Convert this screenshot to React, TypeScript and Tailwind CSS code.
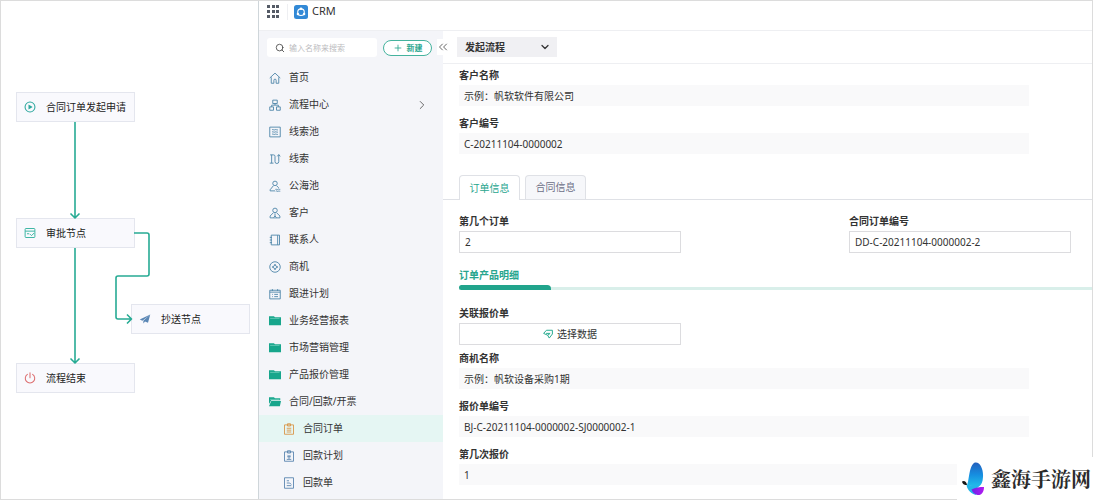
import type { ReactNode } from 'react';
import { ChevronDown, ChevronRight, ChevronsLeft, Plus, Search } from 'lucide-react';

const strokes: Record<string, ReactNode> = {
  home: <path d="M1 8 8 1.500 15 8M3 7v8h3.500v-4a1.500 1.500 0 0 1 3 0v4H13V7" />,
  flow: <path d="M5 1.500h6V6H5zM1 10.500h5V15H1zM10 10.500h5V15h-5zM8 6v2.200M3.500 10.500V8.200h9v2.300" />,
  pool: (
    <path d="M1 1.500h14v13H1zM4 5c1.300-1 2.700 1 4 0s2.700 1 4 0M4 8c1.300-1 2.700 1 4 0s2.700 1 4 0M4 11c1.300-1 2.700 1 4 0s2.700 1 4 0" />
  ),
  clue: <path d="M1 13.500h5M3.500 13.500V2.500M1.500 2.500H6a2 2 0 0 1 2 2v7a2.500 2.500 0 0 0 5 0V2.500M11 4.500l2-2.500 2 2.500" />,
  sea: (
    <path d="M8 1.500a3 3 0 1 1 0 6 3 3 0 0 1 0-6M6 7.500 1.500 13v1.500H8M10 7.500l3 3M8.500 12.500c1.200-1.300 2.200 1.300 3.400 0s2 .6 3.100 0M9 15c1.200-1.300 2.200 1 3.400 0s1.600.4 2.600 0" />
  ),
  customer: <path d="M8 1.500a3 3 0 1 1 0 6 3 3 0 0 1 0-6M6 7.500 1.500 12v2.500h13V12L10 7.500M8 8.500v3.500M6 14l2-2 2 2" />,
  contact: <path d="M3 1.500h11v13H3zM11.500 1.500v13M1 4.500h3M1 8h3M1 11.500h3" />,
  chance: (
    <path d="M8 1a7 7 0 1 1 0 14A7 7 0 0 1 8 1M8 4.200l1.200 2.600L11.800 8 9.200 9.200 8 11.800 6.800 9.200 4.200 8l2.600-1.200z" />
  ),
  plan: <path d="M1 3h14v11.500H1zM4.500 1.500V4M11.500 1.500V4M1 5.500h14M4 8.500h1M7 8.500h5M4 11.500h1M7 11.500h5" />,
  order: <path d="M2 2.500h12V15H2zM6 1h4v3H6zM5 7h6M5 9.500h6M5 12h6" />,
  payplan: <path d="M2 2.500h12V15H2zM6 1h4v3H6zM6 6.500l2 2 2-2M5.500 9h5M8 8.500v3.500M5 12.500h6" />,
  paynote: <path d="M2 1h12v14H2zM5 5h3M5 8h4l2 2M5 11.500h6" />,
};

const menu = [
  { icon: 'home', label: '首页' },
  { icon: 'flow', label: '流程中心', more: true },
  { icon: 'pool', label: '线索池' },
  { icon: 'clue', label: '线索' },
  { icon: 'sea', label: '公海池' },
  { icon: 'customer', label: '客户' },
  { icon: 'contact', label: '联系人' },
  { icon: 'chance', label: '商机' },
  { icon: 'plan', label: '跟进计划' },
  { icon: 'folder', label: '业务经营报表' },
  { icon: 'folder', label: '市场营销管理' },
  { icon: 'folder', label: '产品报价管理' },
  { icon: 'folderOpen', label: '合同/回款/开票' },
];

const subMenu = [
  { icon: 'order', label: '合同订单', active: true },
  { icon: 'payplan', label: '回款计划' },
  { icon: 'paynote', label: '回款单' },
];

function MenuIcon({ name, className }: { name: string; className: string }) {
  if (name === 'folder' || name === 'folderOpen') {
    return (
      <svg viewBox="0 0 16 16" className="size-3 shrink-0 text-[#17a68c]" fill="currentColor">
        {name === 'folder' ? (
          <path d="M0 1.500h6.500L8 3h8v10.500H0z" />
        ) : (
          <path d="M0 1.500h6.500L8 3h7v2.500H3L0 10.500zM3 6.500h13l-1.500 7H0z" />
        )}
        <path d="M1.500 4.500h12.500" stroke="#8fdccb" strokeWidth="0.800" />
      </svg>
    );
  }
  return (
    <svg viewBox="0 0 16 16" className={`size-3 shrink-0 ${className}`} fill="none" stroke="currentColor" strokeWidth="1.200">
      {strokes[name]}
    </svg>
  );
}

function FlowNode({ place, icon, label }: { place: string; icon: ReactNode; label: string }) {
  return (
    <div className={`absolute flex h-[30px] w-[119px] items-center gap-2.5 border border-[#e4e6ee] bg-[#f9f9fd] pl-[7px] whitespace-nowrap text-[#222] ${place}`}>
      {icon}
      {label}
    </div>
  );
}

function FlowChart() {
  return (
    <section className="relative w-[258px] shrink-0 border-r border-[#cfd6da]">
      <FlowNode
        place="top-[91px] left-[15px]"
        label="合同订单发起申请"
        icon={
          <svg viewBox="0 0 16 16" className="size-3 shrink-0" fill="none" stroke="#2ba79d" strokeWidth="1.400">
            <circle cx="8" cy="8" r="6.600" />
            <path d="M6 4.800 11.500 8 6 11.200z" fill="#2ba79d" stroke="none" />
          </svg>
        }
      />
      <FlowNode
        place="top-[217px] left-[15px]"
        label="审批节点"
        icon={
          <svg viewBox="0 0 16 16" className="size-3 shrink-0" fill="none" stroke="#3bb5a2" strokeWidth="1.300">
            <rect x="1.500" y="2" width="13" height="12" rx="1" />
            <path d="M1.500 5.500h13M4 9h3M8 9.500l2 2 3.500-3.500" />
          </svg>
        }
      />
      <FlowNode
        place="top-[303px] left-[130px]"
        label="抄送节点"
        icon={
          <svg viewBox="0 0 16 16" className="size-3 shrink-0" fill="#5b87b5">
            <path d="M15 2 1 8.500l3.500 1.700L12 4.500z" />
            <path d="M15 2 5.800 10.200V14l2.200-2.800 4 1.800z" />
          </svg>
        }
      />
      <FlowNode
        place="top-[362px] left-[15px]"
        label="流程结束"
        icon={
          <svg viewBox="0 0 16 16" className="size-3 shrink-0" fill="none" stroke="#dd6f70" strokeWidth="1.400" strokeLinecap="round">
            <path d="M4.500 3.200a6.300 6.300 0 1 0 7 0M8 1v6.500" />
          </svg>
        }
      />
      <svg className="absolute top-0 left-0 h-[400px] w-[257px]" fill="none" stroke="#27ab94" strokeWidth="1.600" strokeLinejoin="round">
        <path d="M74 121v95M69.500 212.500 74 217l4.500-4.500" />
        <path d="M74 247v114M69.500 357.500 74 362l4.500-4.500" />
        <path d="M133 232h13q2 0 2 2v39q0 2-2 2h-29q-2 0-2 2v39q0 2 2 2h13M126 313.500l4.500 4.500-4.500 4.500" />
      </svg>
    </section>
  );
}

function Sidebar() {
  return (
    <aside className="relative w-[184px] shrink-0 bg-[#f4f5f9]">
      <div className="flex h-[33px] items-center gap-1.5 pr-[11px] pl-2">
        <label className="flex h-[19px] min-w-0 flex-1 items-center gap-1 rounded-[3px] bg-white pl-2">
          <Search className="size-2.5 shrink-0 text-[#444]" />
          <input aria-label="搜索" placeholder="输入名称来搜索" className="w-full min-w-0 text-[8px] outline-none placeholder:text-[#bcbcc0]" />
        </label>
        <button className="flex h-4 w-[49px] items-center justify-center gap-1 rounded-full border border-[#45b39e] bg-white text-[8px] font-bold text-[#2aa68f]">
          <Plus className="size-2.5" strokeWidth={2} />
          新建
        </button>
      </div>
      <button aria-label="收起" className="absolute top-2 -right-1.5 z-10 flex h-4 w-3 items-center justify-center bg-white text-[#555]">
        <ChevronsLeft className="size-3.5 shrink-0" strokeWidth={1.5} />
      </button>
      <nav>
        {menu.map((item) => (
          <a key={item.label} href="#" className="flex h-[27px] items-center gap-2 px-2.5">
            <MenuIcon name={item.icon} className="text-[#4e86a9]" />
            <span className="flex-1">{item.label}</span>
            {item.more && <ChevronRight className="mr-1 size-3.5 text-[#555]" strokeWidth={1.5} />}
          </a>
        ))}
        {subMenu.map((item) => (
          <a key={item.label} href="#" className={`flex h-[27px] items-center gap-2 pl-6 ${item.active ? 'bg-[#e5f6f3]' : ''}`}>
            <MenuIcon name={item.icon} className={item.active ? 'text-[#d9964a]' : 'text-[#5b86b0]'} />
            {item.label}
          </a>
        ))}
      </nav>
    </aside>
  );
}

function Field({ id, label, value, boxed }: { id: string; label: string; value: string; boxed?: boolean }) {
  return (
    <div className={boxed ? 'w-[222px]' : 'w-[90%]'}>
      <label htmlFor={id} className="block leading-5 font-bold">
        {label}
      </label>
      <input
        id={id}
        readOnly
        defaultValue={value}
        className={`block w-full px-[5px] outline-none ${boxed ? 'h-[22px] border border-[#dcdcdf] bg-white' : 'h-[21px] bg-[#f9f9fa]'}`}
      />
    </div>
  );
}

function OrderForm() {
  return (
    <main className="min-w-0 flex-1">
      <div className="flex h-[33px] items-center border-b border-[#eeeff2] pl-3.5">
        <div className="relative">
          <select aria-label="流程" className="block h-5 w-[100px] appearance-none bg-[#f0f0f3] pl-2 font-bold outline-none">
            <option>发起流程</option>
          </select>
          <ChevronDown className="pointer-events-none absolute top-1 right-1.5 size-3" strokeWidth={2.5} />
        </div>
      </div>

      <div className="flex flex-col gap-[7px] pt-px pl-4">
        <Field id="customer-name" label="客户名称" value="示例：帆软软件有限公司" />
        <Field id="customer-code" label="客户编号" value="C-20211104-0000002" />
      </div>

      <div className="mt-[21px] flex h-[25px] gap-[5px] border-b border-[#dfe1e6] pl-4">
        <button className="-mb-px w-[61px] rounded-t-sm border border-b-0 border-[#dfe1e6] bg-white text-[#27a58e]">订单信息</button>
        <button className="w-[61px] rounded-t-sm border border-b-0 border-[#dfe1e6] bg-[#f6f7fa] text-[#6c6f86]">合同信息</button>
      </div>

      <div className="pl-4">
        <div className="flex justify-between pt-[11px] pr-[21px]">
          <Field id="order-index" label="第几个订单" value="2" boxed />
          <Field id="order-code" label="合同订单编号" value="DD-C-20211104-0000002-2" boxed />
        </div>

        <h2 className="mt-3 leading-5 font-bold text-[#27a58e]">订单产品明细</h2>
        <div className="border-b-[3px] border-[#d9efea]">
          <div className="-mb-[3px] h-[5px] w-[92px] rounded-tl-sm rounded-tr-md rounded-bl-sm bg-[#21a48c]" />
        </div>

        <div className="mt-[13px] w-[222px]">
          <h3 className="leading-5 font-bold">关联报价单</h3>
          <button className="flex h-[22px] w-full items-center justify-center gap-1 border border-[#dcdcdf] bg-white">
            <svg viewBox="0 0 16 16" className="size-2.5" fill="none" stroke="#2aac91" strokeWidth="1.600" strokeLinejoin="round">
              <path d="M1 7 5.500 2H15v6l-5 6.500L7.500 10zM5 7h6M7.500 10l4-3" />
            </svg>
            选择数据
          </button>
        </div>

        <div className="mt-[3px] flex flex-col gap-[7px] pb-3">
          <Field id="chance-name" label="商机名称" value="示例：帆软设备采购1期" />
          <Field id="quote-code" label="报价单编号" value="BJ-C-20211104-0000002-SJ0000002-1" />
          <Field id="quote-index" label="第几次报价" value="1" />
        </div>
      </div>
    </main>
  );
}

function Watermark() {
  return (
    <div className="absolute -right-px -bottom-px z-20 flex h-[43px] w-[136px] items-center gap-1.5 bg-white pl-1">
      <svg viewBox="0 0 24 34" className="h-[34px] w-6 shrink-0">
        <defs>
          <linearGradient id="wing" x1="0" y1="0" x2="0" y2="1">
            <stop offset="0" stopColor="#2460bd" />
            <stop offset="0.5" stopColor="#168de0" />
            <stop offset="1" stopColor="#22bfea" />
          </linearGradient>
          <linearGradient id="tail" x1="0" y1="0" x2="1" y2="0">
            <stop offset="0" stopColor="#6a24e8" />
            <stop offset="1" stopColor="#b51af0" />
          </linearGradient>
        </defs>
        <path d="M14 .5C19-.5 22.500 7 22 15c-.3 5-1.500 8-4 9.500L6 23.500C8.500 17 8 3 14 .5z" fill="url(#wing)" />
        <path d="M5.500 22.500c4 1 9 1 13 .5-1 3-4 4-7 4.500 0 2 2 4 4.500 5.500-5-.5-10-4.500-10.500-10.500z" fill="#24b5e9" />
        <path d="M10.500 27.500c4-2 8-2.500 12.500-2.500 0 5-2.500 8.500-6.500 8-3-.5-5-2.500-6-5.500z" fill="url(#tail)" />
        <path d="M1 19.500c2-1.500 4.500 0 5 3.500-2 0-4.500-.5-5-3.500z" fill="#171717" />
      </svg>
      <span className="font-['Noto_Serif_CJK_SC','Noto_Sans_CJK_SC',serif] text-[20px] font-bold whitespace-nowrap text-[#2b2b2b]">鑫海手游网</span>
    </div>
  );
}

export default function App() {
  return (
    <div className="relative flex min-h-screen border border-[#dcdcdc] bg-white font-['Noto_Sans','Noto_Sans_CJK_SC',sans-serif] text-[10px] text-[#333]">
      <FlowChart />
      <div className="flex min-w-0 flex-1 flex-col">
        <header className="flex h-[30px] items-center border-b border-[#eeeff2] pb-2 pl-2">
          <button aria-label="应用" className="grid w-3 grid-cols-3 gap-0.5">
            {Array.from({ length: 9 }, (_, i) => (
              <span key={i} className="size-[3px] bg-[#555b66]" />
            ))}
          </button>
          <span className="mr-1.5 ml-2 h-4 border-l border-[#eeeff2]" />
          <svg viewBox="0 0 14 14" className="size-3.5">
            <rect width="14" height="14" rx="2.500" fill="#3289d6" />
            <circle cx="7" cy="7.200" r="3.300" fill="none" stroke="#fff" strokeWidth="1.100" />
            <circle cx="7" cy="3.700" r="1.200" fill="#fff" />
            <circle cx="3.900" cy="9" r="1.200" fill="#fff" />
            <circle cx="10.100" cy="9" r="1.200" fill="#fff" />
          </svg>
          <h1 className="ml-1 text-[11px]">CRM</h1>
        </header>
        <div className="flex flex-1">
          <Sidebar />
          <OrderForm />
        </div>
      </div>
      <Watermark />
    </div>
  );
}
